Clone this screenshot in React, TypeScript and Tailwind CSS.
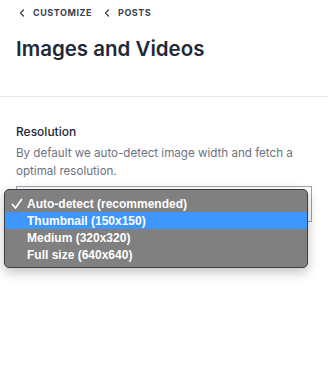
import { ChevronLeft } from "lucide-react";

const options = [
  { label: "Auto-detect (recommended)", checked: true },
  { label: "Thumbnail (150x150)", active: true },
  { label: "Medium (320x320)" },
  { label: "Full size (640x640)" },
];

export default function App() {
  return (
    <div className="relative h-[382px] w-[328px] overflow-hidden bg-white font-['Inter',sans-serif]">
      <nav className="flex items-center gap-[5px] px-4 pt-[6px] text-[9px] font-bold uppercase tracking-[0.06em] text-[#374151]">
        <ChevronLeft className="h-3 w-3" strokeWidth={2.5} />
        <span>Customize</span>
        <ChevronLeft className="ml-1 h-3 w-3" strokeWidth={2.5} />
        <span>Posts</span>
      </nav>

      <h1 className="px-4 pt-[15px] text-[20.5px] font-semibold leading-7 text-[#1f2937]">
        Images and Videos
      </h1>

      <hr className="mt-[33px] border-[#e5e7eb]" />

      <section className="px-4 pt-[25px]">
        <p className="text-[12px] font-medium leading-5 text-[#1f2937]">Resolution</p>
        <p className="mt-[2px] pr-1 text-[11.6px] leading-[18px] text-[#6b7280]">
          By default we auto-detect image width and fetch a optimal resolution.
        </p>
        <div className="mt-[6px] flex h-[36px] items-center justify-between border border-[#9ca3af] px-3 text-[12px] text-[#1f2937]">
          <span>Auto-detect (recommended)</span>
        </div>
      </section>

      <div className="absolute left-[4px] top-[189px] w-[304px] rounded-[5px] border border-[#3f3f3f] bg-[#808080] pb-[4px] pt-[5px] font-['Liberation_Sans',sans-serif] text-[12px] font-bold text-white shadow-[0_4px_12px_rgba(0,0,0,0.25)]">
        {options.map((o) => (
          <div
            key={o.label}
            className={`flex h-[17px] items-center pl-[22px] leading-none ${o.active ? "bg-[#3d97fe]" : ""}`}
          >
            <span className="relative">
              {o.checked && (
                <svg
                  viewBox="0 0 12 12"
                  className="absolute -left-[16px] top-[0px] h-[12px] w-[12px]"
                  fill="none"
                  stroke="white"
                  strokeWidth="1.7"
                  strokeLinecap="round"
                  strokeLinejoin="round"
                >
                  <path d="M1.5 6.5 L4.5 10 L10.5 1.5" />
                </svg>
              )}
              {o.label}
            </span>
          </div>
        ))}
      </div>
    </div>
  );
}
